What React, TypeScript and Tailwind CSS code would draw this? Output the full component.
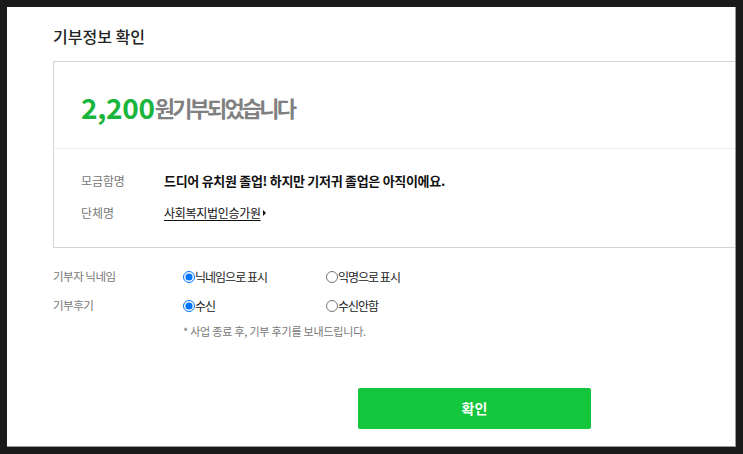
import React, { useState } from 'react';

const font = { fontFamily: '"Noto Sans CJK KR", "Noto Sans", sans-serif' };

const Radio: React.FC<{ checked: boolean; label: string; onClick: () => void }> = ({ checked, label, onClick }) => (
  <label className="flex items-center cursor-pointer" onClick={onClick}>
    <input type="radio" readOnly checked={checked} className="m-0 w-[12px] h-[12px] accent-[#0075ff]" />
    <span className="text-[12px] text-[#222] tracking-[-1px]">{label}</span>
  </label>
);

export default function App() {
  const [nick, setNick] = useState(true);
  const [review, setReview] = useState(true);

  return (
    <div className="w-[743px] h-[454px] bg-[#1a1a1a] p-[7px]" style={font}>
      <div className="w-[729px] h-[440px] bg-white border-r border-b border-[#9a9a9a] overflow-hidden pl-[46px]">
        <h1 className="pt-[21px] mb-[17px] text-[16px] leading-[16px] font-medium text-[#222]">
          기부정보 확인
        </h1>

        <div className="w-[720px] border border-[#d4d4d4]">
          <div className="h-[86px] flex items-center pl-[27px] pt-[3px]">
            <span className="text-[28px] font-bold text-[#1ab53c] tracking-[-0.3px]">2,200</span>
            <span className="text-[22px] font-bold text-[#808080] tracking-[-2.8px] mt-[2px]">원기부되었습니다</span>
          </div>
          <div className="border-t border-[#eeeeee] pl-[27px] pt-[22px] pb-[24px]">
            <div className="flex items-center h-[20px]">
              <span className="w-[83px] text-[12px] text-[#777] tracking-[-0.1px]">모금함명</span>
              <span className="text-[13px] font-bold text-[#111] tracking-[-0.3px]">
                드디어 유치원 졸업! 하지만 기저귀 졸업은 아직이에요.
              </span>
            </div>
            <div className="flex items-center h-[20px] mt-[12px]">
              <span className="w-[83px] text-[12px] text-[#777] tracking-[-0.1px]">단체명</span>
              <span className="text-[12px] text-[#111] underline underline-offset-2 tracking-[-0.3px]">사회복지법인승가원</span>
              <span className="ml-[2px] w-0 h-0 border-y-[3px] border-y-transparent border-l-[3px] border-l-[#111]" />
            </div>
          </div>
        </div>

        <div className="mt-[19px]">
          <div className="flex items-center h-[20px]">
            <span className="w-[130px] text-[11.5px] text-[#777] tracking-[-0.5px]">기부자 닉네임</span>
            <div className="w-[143px]">
              <Radio checked={nick} label="닉네임으로 표시" onClick={() => setNick(true)} />
            </div>
            <Radio checked={!nick} label="익명으로 표시" onClick={() => setNick(false)} />
          </div>
          <div className="flex items-center h-[20px] mt-[9px]">
            <span className="w-[130px] text-[11.5px] text-[#777] tracking-[-0.5px]">기부후기</span>
            <div className="w-[143px]">
              <Radio checked={review} label="수신" onClick={() => setReview(true)} />
            </div>
            <Radio checked={!review} label="수신안함" onClick={() => setReview(false)} />
          </div>
          <p className="ml-[130px] mt-[5px] text-[11px] leading-[20px] text-[#777] tracking-[-0.2px]">
            * 사업 종료 후, 기부 후기를 보내드립니다.
          </p>
        </div>

        <button className="mt-[47px] ml-[305px] w-[233px] h-[41px] rounded-[2px] bg-[#13c63b] text-white text-[14px] font-bold">
          확인
        </button>
      </div>
    </div>
  );
}
